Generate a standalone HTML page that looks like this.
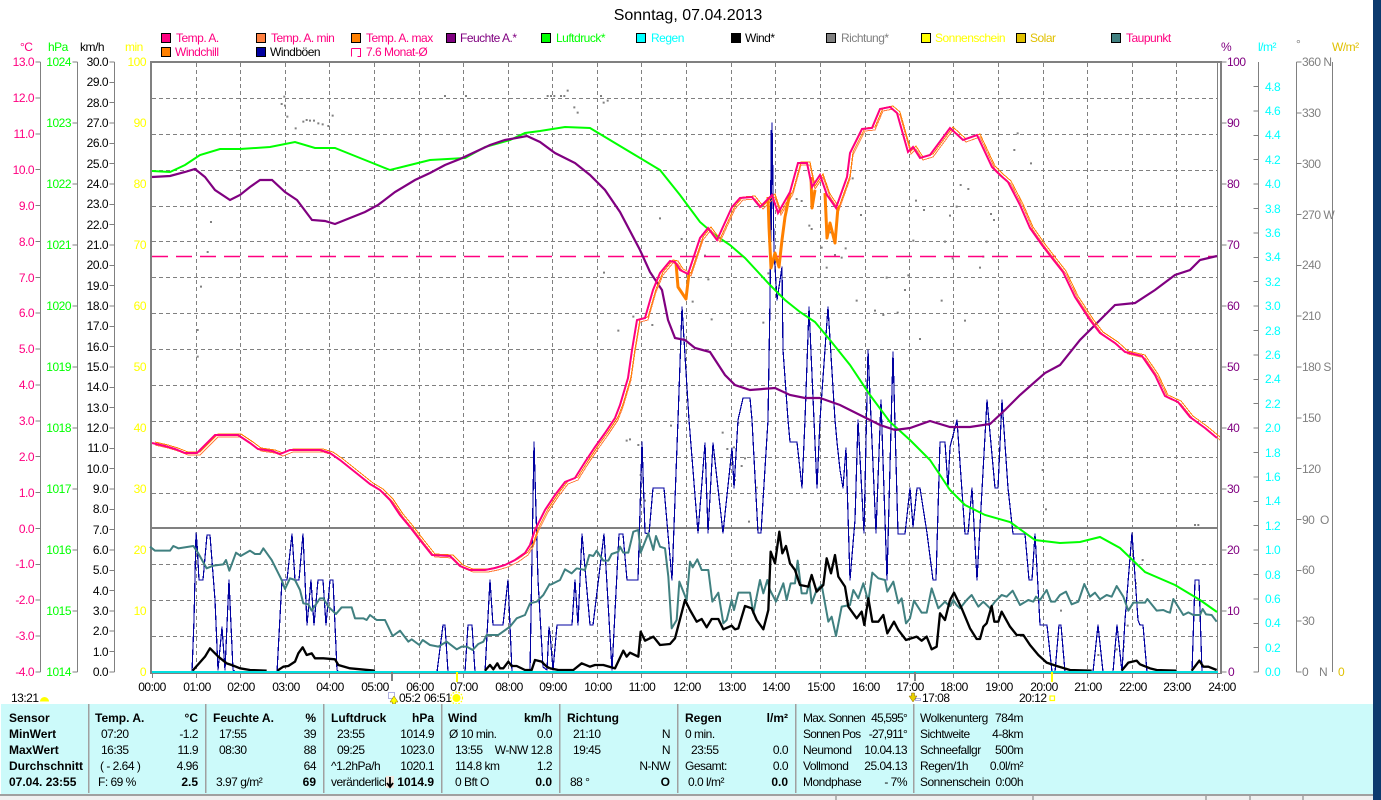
<!DOCTYPE html>
<html><head><meta charset="utf-8"><title>Sonntag, 07.04.2013</title>
<style>
html,body{margin:0;padding:0;background:#fff;overflow:hidden}
svg{display:block;font-family:"Liberation Sans",sans-serif;font-size:12px;letter-spacing:-.5px}
.b{font-weight:bold;letter-spacing:0}
.e{text-anchor:end}
.t{letter-spacing:-.8px}
.z polyline{fill:none;stroke-linejoin:round}
</style></head><body>
<svg width="1381" height="800" viewBox="0 0 1381 800" xmlns="http://www.w3.org/2000/svg">
<rect width="1381" height="800" fill="#fff"/>
<!-- title -->
<text x="688" y="20" text-anchor="middle" font-size="16" style="font-size:16px;letter-spacing:0">Sonntag, 07.04.2013</text>

<!-- legend -->
<g stroke="#000" stroke-width="1">
<rect x="161.5" y="33.5" width="9" height="9" fill="#ff0080"/>
<rect x="256.5" y="33.5" width="9" height="9" fill="#ff8040"/>
<rect x="351.5" y="33.5" width="9" height="9" fill="#ff8000"/>
<rect x="446.5" y="33.5" width="9" height="9" fill="#800080"/>
<rect x="541.5" y="33.5" width="9" height="9" fill="#00ff00"/>
<rect x="636.5" y="33.5" width="9" height="9" fill="#00ffff"/>
<rect x="731.5" y="33.5" width="9" height="9" fill="#000"/>
<rect x="826.5" y="33.5" width="9" height="9" fill="#808080"/>
<rect x="921.5" y="33.5" width="9" height="9" fill="#ffff00"/>
<rect x="1016.5" y="33.5" width="9" height="9" fill="#e0c000"/>
<rect x="1111.5" y="33.5" width="9" height="9" fill="#408080"/>
<rect x="161.5" y="47.5" width="9" height="9" fill="#ff8000"/>
<rect x="256.5" y="47.5" width="9" height="9" fill="#0000a0"/>
</g>
<path d="M351.5 48.5h9v8h-3" fill="none" stroke="#ff0080"/><path d="M351.5 48.5v8" fill="none" stroke="#ff0080"/>
<g fill="#ff0080">
<text x="176" y="42">Temp. A.</text><text x="271" y="42">Temp. A. min</text><text x="366" y="42">Temp. A. max</text>
<text x="175" y="56">Windchill</text><text x="366" y="56">7.6 Monat-Ø</text><text x="1126" y="42">Taupunkt</text>
</g>
<text x="270" y="56">Windböen</text>
<text x="460" y="42" fill="#800080">Feuchte A.*</text>
<text x="556" y="42" fill="#00ff00">Luftdruck*</text>
<text x="651" y="42" fill="#00ffff">Regen</text>
<text x="745" y="42">Wind*</text>
<text x="841" y="42" fill="#808080">Richtung*</text>
<text x="935" y="42" fill="#ffff00">Sonnenschein</text>
<text x="1030" y="42" fill="#e0c000">Solar</text>

<!-- units -->
<text x="20" y="51" fill="#ff0080">°C</text><text x="48" y="51" fill="#00ff00">hPa</text><text x="80" y="51">km/h</text><text x="125" y="51" fill="#ffff00">min</text>
<text x="1221" y="51" fill="#800080">%</text><text x="1258" y="51" fill="#00ffff">l/m²</text><text x="1296" y="48" fill="#808080">°</text><text x="1332" y="51" fill="#e0c000">W/m²</text>

<!-- axis lines and ticks -->
<g stroke="#808080" fill="none" shape-rendering="crispEdges">
<path d="M40.5 62V672M77.5 62V672M114.5 62V672M1258.5 62V672M1296.5 62V672M1332.5 62V672"/>
<line x1="38" x2="38" y1="61.5" y2="673" stroke-width="5" stroke-dasharray="1 34.88"/>
<line x1="75" x2="75" y1="61.5" y2="673" stroke-width="5" stroke-dasharray="1 60"/>
<line x1="112" x2="112" y1="61.5" y2="673" stroke-width="5" stroke-dasharray="1 19.33"/>
<line x1="1224" x2="1224" y1="61.5" y2="673" stroke-width="5" stroke-dasharray="1 60"/>
<line x1="1256" x2="1256" y1="86" y2="673" stroke-width="5" stroke-dasharray="1 23.4"/>
<line x1="1299" x2="1299" y1="61.5" y2="673" stroke-width="5" stroke-dasharray="1 49.83"/>
</g>

<!-- left labels -->
<g class="e" fill="#ff0080">
<text class="e" x="34" y="66">13.0</text><text class="e" x="34" y="102">12.0</text><text class="e" x="34" y="138">11.0</text><text class="e" x="34" y="174">10.0</text><text class="e" x="34" y="210">9.0</text><text class="e" x="34" y="246">8.0</text><text class="e" x="34" y="282">7.0</text><text class="e" x="34" y="317">6.0</text><text class="e" x="34" y="353">5.0</text><text class="e" x="34" y="389">4.0</text><text class="e" x="34" y="425">3.0</text><text class="e" x="34" y="461">2.0</text><text class="e" x="34" y="497">1.0</text><text class="e" x="34" y="533">0.0</text><text class="e" x="34" y="568">-1.0</text><text class="e" x="34" y="604">-2.0</text><text class="e" x="34" y="640">-3.0</text><text class="e" x="34" y="676">-4.0</text>
</g>
<g fill="#00ff00">
<text class="e" x="71" y="66">1024</text><text class="e" x="71" y="127">1023</text><text class="e" x="71" y="188">1022</text><text class="e" x="71" y="249">1021</text><text class="e" x="71" y="310">1020</text><text class="e" x="71" y="371">1019</text><text class="e" x="71" y="432">1018</text><text class="e" x="71" y="493">1017</text><text class="e" x="71" y="554">1016</text><text class="e" x="71" y="615">1015</text><text class="e" x="71" y="676">1014</text>
</g>
<g>
<text class="e" x="108" y="66">30.0</text><text class="e" x="108" y="86">29.0</text><text class="e" x="108" y="107">28.0</text><text class="e" x="108" y="127">27.0</text><text class="e" x="108" y="147">26.0</text><text class="e" x="108" y="168">25.0</text><text class="e" x="108" y="188">24.0</text><text class="e" x="108" y="208">23.0</text><text class="e" x="108" y="229">22.0</text><text class="e" x="108" y="249">21.0</text><text class="e" x="108" y="269">20.0</text><text class="e" x="108" y="290">19.0</text><text class="e" x="108" y="310">18.0</text><text class="e" x="108" y="330">17.0</text><text class="e" x="108" y="351">16.0</text><text class="e" x="108" y="371">15.0</text><text class="e" x="108" y="391">14.0</text><text class="e" x="108" y="412">13.0</text><text class="e" x="108" y="432">12.0</text><text class="e" x="108" y="452">11.0</text><text class="e" x="108" y="473">10.0</text><text class="e" x="108" y="493">9.0</text><text class="e" x="108" y="513">8.0</text><text class="e" x="108" y="534">7.0</text><text class="e" x="108" y="554">6.0</text><text class="e" x="108" y="574">5.0</text><text class="e" x="108" y="595">4.0</text><text class="e" x="108" y="615">3.0</text><text class="e" x="108" y="635">2.0</text><text class="e" x="108" y="656">1.0</text><text class="e" x="108" y="676">0.0</text>
</g>
<g fill="#ffff00">
<text class="e" x="146" y="66">100</text><text class="e" x="146" y="127">90</text><text class="e" x="146" y="188">80</text><text class="e" x="146" y="249">70</text><text class="e" x="146" y="310">60</text><text class="e" x="146" y="371">50</text><text class="e" x="146" y="432">40</text><text class="e" x="146" y="493">30</text><text class="e" x="146" y="554">20</text><text class="e" x="146" y="615">10</text><text class="e" x="146" y="676">0</text>
</g>

<!-- right labels -->
<g fill="#800080">
<text x="1227" y="66">100</text><text x="1227" y="127">90</text><text x="1227" y="188">80</text><text x="1227" y="249">70</text><text x="1227" y="310">60</text><text x="1227" y="371">50</text><text x="1227" y="432">40</text><text x="1227" y="493">30</text><text x="1227" y="554">20</text><text x="1227" y="615">10</text><text x="1228" y="676">0</text>
</g>
<g fill="#00ffff">
<text x="1265" y="91">4.8</text><text x="1265" y="115">4.6</text><text x="1265" y="139">4.4</text><text x="1265" y="164">4.2</text><text x="1265" y="188">4.0</text><text x="1265" y="213">3.8</text><text x="1265" y="237">3.6</text><text x="1265" y="261">3.4</text><text x="1265" y="286">3.2</text><text x="1265" y="310">3.0</text><text x="1265" y="335">2.8</text><text x="1265" y="359">2.6</text><text x="1265" y="383">2.4</text><text x="1265" y="408">2.2</text><text x="1265" y="432">2.0</text><text x="1265" y="457">1.8</text><text x="1265" y="481">1.6</text><text x="1265" y="505">1.4</text><text x="1265" y="530">1.2</text><text x="1265" y="554">1.0</text><text x="1265" y="579">0.8</text><text x="1265" y="603">0.6</text><text x="1265" y="627">0.4</text><text x="1265" y="652">0.2</text><text x="1265" y="676">0.0</text>
</g>
<g fill="#808080">
<text x="1302" y="66">360 N</text><text x="1302" y="117">330</text><text x="1302" y="168">300</text><text x="1302" y="219">270 W</text><text x="1302" y="269">240</text><text x="1302" y="320">210</text><text x="1302" y="371">180 S</text><text x="1302" y="422">150</text><text x="1302" y="473">120</text><text x="1302" y="524">90&#160;&#160;O</text><text x="1302" y="574">60</text><text x="1302" y="625">30</text><text x="1302" y="676">0</text><text x="1319" y="676">N</text>
</g>
<text x="1338" y="676" fill="#e0c000">0</text>

<!-- grid -->
<g stroke="#808080" fill="none" shape-rendering="crispEdges" stroke-dasharray="4 3">
<path d="M152 98.5H1217M152 134.5H1217M152 170.5H1217M152 206.5H1217M152 241.5H1217M152 277.5H1217M152 313.5H1217M152 349.5H1217M152 385.5H1217M152 421.5H1217M152 457.5H1217M152 493.5H1217M152 564.5H1217M152 600.5H1217M152 636.5H1217"/>
<path d="M196.5 63V672M240.5 63V672M285.5 63V672M329.5 63V672M374.5 63V672M419.5 63V672M463.5 63V672M508.5 63V672M552.5 63V672M597.5 63V672M641.5 63V672M686.5 63V672M731.5 63V672M775.5 63V672M820.5 63V672M865.5 63V672M909.5 63V672M953.5 63V672M998.5 63V672M1043.5 63V672M1087.5 63V672M1132.5 63V672M1176.5 63V672"/>
</g>

<!-- direction dots -->
<g transform="translate(0,0) scale(.33333)" stroke="#808080" stroke-width="6" fill="none">
<path d="M842 312h6M852 317h6M859 350h6M884 385h6M907 365h6M917 360h6M927 362h6M939 362h6M952 370h6M965 373h6M982 378h6M995 347h6M1332 288h6M1395 288h6M1640 288h6M1650 288h6M1660 288h6M1680 288h6M1690 288h6M1800 288h6M1808 308h6M1820 302h6M1700 272h6M1720 322h6M1730 338h6M630 666h6M620 756h6M600 860h6M590 990h6M590 1070h6M850 290h6"/>
</g>
<g transform="translate(600,90) scale(.33333)" stroke="#808080" stroke-width="6" fill="none">
<path d="M177 385h6M242 447h6M312 497h6M322 568h6M9 548h6M97 680h6M154 705h6M52 722h6M332 688h6M275 635h6M487 698h6M502 550h6M552 392h6M587 327h6M602 333h6M625 407h6M632 417h6M662 473h6M677 533h6M702 495h6M722 503h6M734 475h6M780 375h6M755 265h6M945 332h6M969 360h6M1047 377h6M1067 350h6M1079 285h6M1102 297h6M1170 372h6M1179 390h6M1032 455h6M937 452h6M857 563h6M922 556h6M912 600h6M1022 632h6M1092 692h6M957 747h6M767 632h6M822 662h6M847 675h6M890 668h6M1055 505h6M1137 533h6M1147 500h6M1157 455h6M689 427h6M1240 180h6M1290 220h6M1250 130h6"/>
</g>
<g transform="translate(550,420) scale(.33333)" stroke="#808080" stroke-width="6" fill="none">
<path d="M227 62h6M237 58h6M262 75h6M360 17h6M515 38h6M562 8h6M529 87h6M549 82h6M582 115h6M572 138h6M552 180h6M617 203h6M594 305h6M282 242h6M269 165h6"/>
</g>
<g transform="translate(950,420) scale(.33333)" stroke="#808080" stroke-width="6" fill="none">
<path d="M275 150h6M285 268h6M330 572h6M442 705h6M530 617h6M497 688h6M519 680h6M575 420h6M555 490h6M732 315h6M742 315h6"/>
</g>

<!-- frame -->
<g fill="#808080">
<rect x="150" y="61" width="1072" height="2"/>
<rect x="150" y="61" width="2" height="613"/>
<rect x="1217" y="62" width="1" height="611"/>
<rect x="1220" y="61" width="2" height="613"/>
<rect x="152" y="527" width="1066" height="2"/>
<rect x="150" y="673" width="1072" height="1"/>
</g>
<path d="M152 256.5H1217" stroke="#ff0080" stroke-width="1.4" stroke-dasharray="16 8" fill="none"/>
<path d="M196.5 674v4M240.5 674v4M285.5 674v4M329.5 674v4M374.5 674v4M419.5 674v4M463.5 674v4M508.5 674v4M552.5 674v4M597.5 674v4M641.5 674v4M686.5 674v4M731.5 674v4M775.5 674v4M820.5 674v4M865.5 674v4M909.5 674v4M953.5 674v4M998.5 674v4M1043.5 674v4M1087.5 674v4M1132.5 674v4M1176.5 674v4M152.5 674v4M1217.5 674v4" stroke="#808080" fill="none" shape-rendering="crispEdges"/>

<!-- gust (blue) -->
<polyline fill="none" stroke="#0000a0" stroke-width="1.2" stroke-linejoin="round" shape-rendering="crispEdges" points="192,672 194,620 196,533 197,543 199,580 203,580 207,535 210,535 215,600 218,670 222,627 225,670 229,580 233,670 236,672 277,672 282,580 287,580 292,534 295,580 299,580 303,534 307,625 311,580 314,625 318,580 323,580 326,625 330,580 333,580 337,670 339,672 437,672 443,625 445,625 448,672 465,672 468,625 472,625 475,672 485,672 490,580 493,625 503,625 508,580 512,672 530,672 534,442 538,580 543,667 547,670 549,627 550,633 553,670 557,625 572,625 575,580 578,625 582,534 590,625 593,625 604,534 612,670 619,534 623,534 627,580 638,580 642,442 645,533 649,534 653,488 664,488 672,580 678,420 682,307 689,420 698,533 705,443 708,533 713,443 723,533 732,448 734,488 738,420 743,398 750,398 752,420 758,533 761,533 768,420 770,300 772,123 774,250 777,300 782,267 783,350 788,420 790,442 797,442 802,488 805,420 809,307 817,488 820,420 828,307 835,420 837,442 840,470 843,488 846,448 850,580 855,520 858,420 864,533 868,350 876,533 881,400 887,580 893,352 898,534 905,534 910,488 913,527 917,488 920,488 927,533 933,580 936,580 940,442 945,442 948,488 950,447 957,420 965,534 968,534 972,488 977,580 987,400 995,488 998,488 1002,400 1008,488 1013,534 1025,534 1029,580 1032,580 1035,534 1038,587 1040,625 1047,625 1052,672 1055,672 1059,625 1061,625 1065,672 1093,672 1098,625 1103,672 1113,672 1117,625 1122,672 1125,620 1132,533 1138,620 1140,625 1143,625 1147,672 1192,672 1195,580 1199,580 1202,672 1217,672"/>
<path d="M771.5 130v55M771 180v50" stroke="#0000a0" stroke-width="2" fill="none"/>

<!-- dew point (teal) -->
<g class="z" stroke="#408080" stroke-width="6">
<g transform="translate(150,420) scale(.33333)"><polyline points="0,380 15,392 60,392 70,378 85,385 130,378 145,400 170,445 190,437 220,433 228,420 238,452 258,398 272,408 300,392 315,402 330,402 340,385 365,420 385,460 395,480 405,507 420,475 435,480 450,510 460,550 475,553 485,572 510,535 520,535 535,560 558,582 575,562 605,562 615,595 640,595 650,600 660,585 680,600 705,600 728,648 750,632 775,665 785,658 808,675 818,660 840,675 865,680 890,665 920,688 935,680 950,680 968,690 985,672 1000,665 1010,645 1045,645 1080,620 1100,595 1125,585 1140,550 1160,545 1180,525 1200,490"/></g>
<g transform="translate(550,420) scale(.33333)"><polyline points="0,495 30,480 45,448 65,460 80,445 105,450 118,405 130,408 140,392 160,422 175,422 185,402 205,395 210,380 220,398 235,398 250,335 265,330 272,398 295,340 310,390 318,348 330,380 345,385 355,470 365,625 380,600 388,485 410,540 420,425 428,442 442,418 455,450 475,450 487,545 505,518 520,610 530,600 545,540 552,570 565,518 600,518 610,580 630,480 640,520 652,480 660,510 678,545 700,490 710,540 722,490 735,490 743,422 755,520 770,520 778,485 785,550 800,510 815,495 835,605 845,590 858,648 875,560 900,555 910,510 925,535 940,490 955,545 967,458 985,475 1005,480 1012,515 1030,485 1045,550 1055,535 1068,610 1080,595 1092,542 1115,578 1130,578 1145,505 1165,565 1185,545 1200,560"/></g>
<g transform="translate(950,420) scale(.33333)"><polyline points="0,560 10,540 20,555 30,565 50,540 65,525 85,560 100,545 120,565 135,545 155,525 170,530 188,512 210,555 235,540 250,545 258,530 270,540 290,510 303,545 315,545 330,525 348,515 365,553 385,545 403,492 420,530 435,518 450,538 470,525 485,530 500,498 520,530 535,572 550,548 585,548 592,537 620,572 640,570 650,575 660,578 670,537 700,585 715,577 730,585 750,585 758,567 768,583 785,585 800,605"/></g>
</g>

<!-- wind (black) -->
<g class="z" stroke="#000" stroke-width="7">
<g transform="translate(150,420) scale(.33333)"><polyline points="128,752 165,710 180,685 205,710 230,730 245,735 270,745 300,750 350,752"/><polyline points="382,752 400,740 415,738 435,725 445,700 458,682 470,705 485,700 495,715 520,715 555,718 565,735 600,745 675,752"/><polyline points="1005,752 1020,735 1030,748 1042,730 1050,745 1060,745 1075,725 1085,738 1100,738 1125,750 1145,750 1155,720 1175,725 1190,740 1200,745"/></g>
<g transform="translate(550,420) scale(.33333)"><polyline points="0,745 25,750 70,750 95,730 120,740 135,735 160,735 195,745 220,692 230,710 240,698 265,710 272,635 285,662 310,650 330,675 360,672 375,655 405,540 420,570 440,605 455,597 470,622 485,597 505,597 520,628 545,617 555,628 565,625 585,558 605,565 620,600 640,628 655,570 662,395 675,430 688,335 697,400 708,378 720,430 735,450 750,495 775,500 785,465 800,515 820,495 830,415 843,460 855,405 865,470 885,500 895,560 920,595 935,575 943,615 955,535 967,605 985,605 1000,585 1012,640 1032,605 1045,630 1068,660 1100,650 1115,662 1130,650 1145,688 1160,680 1170,580 1185,600 1200,540"/></g>
<g transform="translate(950,420) scale(.33333)"><polyline points="0,540 12,518 35,565 60,625 80,657 90,657 100,620 110,610 125,558 133,605 145,605 155,575 180,620 200,645 220,645 240,675 265,705 290,728 320,738 360,750 425,752"/><polyline points="515,752 535,728 560,722 570,733 600,745 620,750 680,752"/><polyline points="725,752 748,722 760,740 775,740 800,750"/></g>
</g>

<!-- pressure (green) -->
<polyline fill="none" stroke="#00ff00" stroke-width="2" points="152,171 170,172 185,165 200,155 220,149 240,149 270,147 295,142 315,148 335,148 360,158 390,170 410,165 430,160 465,158 485,147 510,140 525,133 540,131 565,127 590,128 610,140 635,155 660,170 680,195 700,222 715,235 730,245 745,258 770,285 785,300 800,312 815,322 830,340 850,365 870,395 890,422 910,440 930,460 950,490 965,505 985,515 1010,522 1035,540 1060,543 1080,542 1100,537 1120,548 1145,572 1175,585 1200,600 1217,612"/>

<!-- humidity (purple) -->
<polyline fill="none" stroke="#800080" stroke-width="2.2" points="152,177 170,176 185,172 195,169 205,177 215,190 230,200 240,195 250,187 260,180 272,180 285,192 297,200 312,220 325,221 335,224 350,218 365,212 378,205 395,192 415,180 430,173 445,165 460,159 475,152 490,145 505,140 527,136 540,142 555,153 575,163 590,175 605,190 620,212 640,250 650,272 662,290 668,320 675,338 685,340 695,348 710,352 725,375 735,385 750,390 775,388 790,395 805,398 820,398 840,405 860,415 880,425 895,430 910,428 930,421 950,427 970,427 990,424 1005,410 1020,395 1045,373 1060,365 1080,340 1095,325 1115,305 1135,303 1155,290 1175,275 1190,270 1200,260 1217,256"/>

<!-- temperature family -->
<defs><polyline id="t" fill="none" points="152,443 165,446 175,449 185,453 197,453 205,445 215,435 238,435 250,443 258,449 272,451 280,454 285,452 290,450 320,450 330,453 340,460 350,468 360,476 370,484 380,490 390,500 400,515 410,527 420,540 432,555 450,556 460,566 470,570 485,570 495,568 505,565 515,560 525,553 530,545 535,530 545,510 555,495 565,482 575,478 585,462 595,447 605,433 615,418 620,405 628,378 632,350 637,320 645,318 653,290 660,273 670,261 675,262 680,270 688,274 700,238 708,228 717,240 732,207 740,198 752,197 760,207 772,195 778,213 790,192 798,163 807,163 812,187 820,175 827,195 836,208 847,177 850,153 862,129 872,128 880,109 890,107 897,113 908,152 913,147 920,158 930,155 950,128 963,140 977,135 992,167 1000,175 1008,182 1020,205 1030,228 1042,245 1052,258 1063,272 1075,297 1090,320 1100,333 1115,343 1125,352 1142,356 1155,375 1165,396 1178,402 1190,417 1205,428 1217,438"/></defs>
<use href="#t" transform="translate(3,2)" stroke="#ff8040" stroke-width="1" shape-rendering="crispEdges"/>
<use href="#t" transform="translate(3,-1)" stroke="#ff8000" stroke-width="1" shape-rendering="crispEdges"/>
<g fill="none" stroke="#ff8000" stroke-width="3" stroke-linejoin="round">
<polyline points="676,263 678,287 686,299 689,273"/>
<polyline points="768,197 769,227 771,268 775,253 779,267 782,240 785,217 790,193"/>
<polyline points="811,177 812,208 815,190"/>
<polyline points="825,193 827,238 830,223 835,243 838,207"/>
</g>
<use href="#t" stroke="#ff0080" stroke-width="2"/>

<!-- baseline -->
<rect x="152" y="671" width="1066" height="2" fill="#00e0e0"/>

<!-- hour labels -->
<g style="text-anchor:middle">
<text x="152" y="691">00:00</text><text x="197" y="691">01:00</text><text x="241" y="691">02:00</text><text x="286" y="691">03:00</text><text x="330" y="691">04:00</text><text x="375" y="691">05:00</text><text x="420" y="691">06:00</text><text x="464" y="691">07:00</text><text x="509" y="691">08:00</text><text x="553" y="691">09:00</text><text x="598" y="691">10:00</text><text x="642" y="691">11:00</text><text x="687" y="691">12:00</text><text x="732" y="691">13:00</text><text x="776" y="691">14:00</text><text x="821" y="691">15:00</text><text x="866" y="691">16:00</text><text x="910" y="691">17:00</text><text x="954" y="691">18:00</text><text x="999" y="691">19:00</text><text x="1044" y="691">20:00</text><text x="1088" y="691">21:00</text><text x="1133" y="691">22:00</text><text x="1177" y="691">23:00</text><text x="1222" y="691">24:00</text>
</g>

<!-- sun markers -->
<rect x="391" y="672" width="2" height="9" fill="#808080"/>
<rect x="456" y="672" width="2" height="10" fill="#ffff00"/>
<rect x="914" y="672" width="2" height="9" fill="#808080"/>
<rect x="1051" y="672" width="2" height="10" fill="#ffff00"/>
<text x="11" y="702">13:21</text>
<path d="M40 701.500a4.500 4.500 0 0 1 9 0z" fill="#ffff00"/>
<rect x="388.500" y="692.500" width="6" height="6" fill="none" stroke="#6060c0" stroke-dasharray="1 1"/>
<path d="M394 696l4 6h-2.500v2h-3v-2h-2.500z" fill="#ffff00" stroke="#806000" stroke-width=".5"/>
<text x="399" y="702">05:2</text>
<text x="424" y="702">06:51</text>
<circle cx="456.500" cy="698" r="4" fill="#ffff00"/>
<circle cx="456.500" cy="698" r="6" fill="none" stroke="#ffff00" stroke-width="1.200" stroke-dasharray="1.500 1.500"/>
<path d="M913 702l-4-6h2.500v-3h3v3h2.500z" fill="#e8d000" stroke="#806000" stroke-width=".5"/>
<rect x="915.500" y="698.500" width="5" height="2" fill="none" stroke="#6060c0" stroke-dasharray="1 1"/>
<text x="922" y="702">17:08</text>
<text x="1019" y="702">20:12</text>
<rect x="1050" y="696" width="4.500" height="4.500" fill="none" stroke="#ffff00" stroke-width="1.200"/>

<!-- panel -->
<rect x="1" y="704" width="1372" height="90" fill="#ccfafa"/>
<g fill="#a0a0a0" shape-rendering="crispEdges">
<rect x="88" y="704" width="1.500" height="89"/><rect x="205" y="704" width="1.500" height="89"/><rect x="323" y="704" width="1.500" height="89"/><rect x="441" y="704" width="1.500" height="89"/><rect x="559" y="704" width="1.500" height="89"/><rect x="677" y="704" width="1.500" height="89"/><rect x="795" y="704" width="1.500" height="89"/><rect x="913" y="704" width="1.500" height="89"/>
</g>
<!-- status bar -->
<rect x="0" y="794" width="1373" height="6" fill="#f0f0f0"/>
<rect x="0" y="794" width="1373" height="2" fill="#a0a0a0"/>
<path d="M836 796v4M1033 796v4M1206 796v4M1250 796v4M1303 796v4" stroke="#a0a0a0" stroke-width="1.500" fill="none"/>
<rect x="1373" y="0" width="8" height="800" fill="#0c3a6e"/>

<g class="b">
<text class="b" x="9" y="722">Sensor</text><text class="b" x="9" y="738">MinWert</text><text class="b" x="9" y="754">MaxWert</text><text class="b" x="9" y="770">Durchschnitt</text><text class="b" x="9" y="786">07.04. 23:55</text>
<text class="b" x="95" y="722">Temp. A.</text><text class="b e" x="198" y="722">°C</text><text class="b e" x="198" y="786">2.5</text>
<text class="b" x="213" y="722">Feuchte A.</text><text class="b e" x="316" y="722">%</text><text class="b e" x="316" y="786">69</text>
<text class="b" x="331" y="722">Luftdruck</text><text class="b e" x="434" y="722">hPa</text><text class="b e" x="434" y="786">1014.9</text>
<text class="b" x="448" y="722">Wind</text><text class="b e" x="552" y="722">km/h</text><text class="b e" x="552" y="786">0.0</text>
<text class="b" x="567" y="722">Richtung</text><text class="b e" x="670" y="786">O</text>
<text class="b" x="685" y="722">Regen</text><text class="b e" x="788" y="722">l/m²</text><text class="b e" x="788" y="786">0.0</text>
</g>
<text x="101" y="738">07:20</text><text class="e" x="198" y="738">-1.2</text>
<text x="101" y="754">16:35</text><text class="e" x="198" y="754">11.9</text>
<text x="100" y="770">( - 2.64 )</text><text class="e" x="198" y="770">4.96</text>
<text x="98" y="786">F: 69 %</text>
<text x="219" y="738">17:55</text><text class="e" x="316" y="738">39</text>
<text x="219" y="754">08:30</text><text class="e" x="316" y="754">88</text>
<text class="e" x="316" y="770">64</text>
<text x="216" y="786">3.97 g/m²</text>
<text x="337" y="738">23:55</text><text class="e" x="434" y="738">1014.9</text>
<text x="337" y="754">09:25</text><text class="e" x="434" y="754">1023.0</text>
<text x="331" y="770">^1.2hPa/h</text><text class="e" x="434" y="770">1020.1</text>
<svg x="331" y="775" width="55" height="14" overflow="hidden"><text x="0" y="11">veränderlich</text></svg>
<rect x="386" y="776" width="8" height="12" fill="#f0e8e0"/>
<path d="M390 777v9M387 783l3 4 3-4" stroke="#000" stroke-width="1.800" fill="none"/>
<text x="449" y="738">Ø 10 min.</text><text class="e" x="552" y="738">0.0</text>
<text x="455" y="754">13:55</text><text class="e" x="552" y="754">W-NW 12.8</text>
<text x="455" y="770">114.8 km</text><text class="e" x="552" y="770">1.2</text>
<text x="455" y="786">0 Bft O</text>
<text x="573" y="738">21:10</text><text class="e" x="670" y="738">N</text>
<text x="573" y="754">19:45</text><text class="e" x="670" y="754">N</text>
<text class="e" x="670" y="770">N-NW</text>
<text x="570" y="786">88 °</text>
<text x="685" y="738">0 min.</text>
<text x="691" y="754">23:55</text><text class="e" x="788" y="754">0.0</text>
<text x="685" y="770">Gesamt:</text><text class="e" x="788" y="770">0.0</text>
<text x="688" y="786">0.0 l/m²</text>
<text class="t" x="803" y="722">Max. Sonnen</text><text class="e t" x="907" y="722">45,595°</text>
<text class="t" x="803" y="738">Sonnen Pos</text><text class="e t" x="907" y="738">-27,911°</text>
<text x="803" y="754">Neumond</text><text class="e" x="907" y="754">10.04.13</text>
<text x="803" y="770">Vollmond</text><text class="e" x="907" y="770">25.04.13</text>
<text x="803" y="786">Mondphase</text><text class="e" x="907" y="786">- 7%</text>
<text x="920" y="722">Wolkenunterg</text><text class="e" x="1023" y="722">784m</text>
<text x="920" y="738">Sichtweite</text><text class="e" x="1023" y="738">4-8km</text>
<text x="920" y="754">Schneefallgr</text><text class="e" x="1023" y="754">500m</text>
<text x="920" y="770">Regen/1h</text><text class="e" x="1023" y="770">0.0l/m²</text>
<text x="920" y="786">Sonnenschein</text><text class="e" x="1023" y="786">0:00h</text>
</svg>
</body></html>
